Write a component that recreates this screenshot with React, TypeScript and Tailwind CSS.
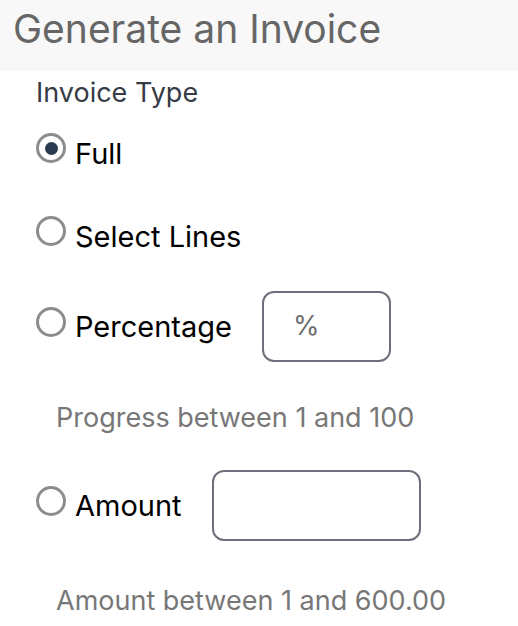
import { useState } from "react";

type Option = {
  id: string;
  label: string;
  input?: { width: string; placeholder?: string };
  help?: string;
};

const OPTIONS: Option[] = [
  { id: "full", label: "Full" },
  { id: "lines", label: "Select Lines" },
  {
    id: "percentage",
    label: "Percentage",
    input: { width: "w-[129px]", placeholder: "%" },
    help: "Progress between 1 and 100",
  },
  {
    id: "amount",
    label: "Amount",
    input: { width: "w-[209px]" },
    help: "Amount between 1 and 600.00",
  },
];

function Radio({ checked }: { checked: boolean }) {
  return (
    <span className="mb-[10px] flex h-[30px] w-[30px] shrink-0 items-center justify-center rounded-full border-[3px] border-[#8c8c8c] bg-white">
      {checked && <span className="h-[13px] w-[13px] rounded-full bg-[#2c3a4f]" />}
    </span>
  );
}

export default function App() {
  const [type, setType] = useState("full");

  return (
    <div className="min-h-[626px] w-[518px] bg-white font-['Inter','Liberation_Sans',sans-serif]">
      <div className="h-[71px] bg-[#f8f8f8] px-[13px] pt-[9px]">
        <h1 className="text-[39px] leading-none text-[#666666]">Generate an Invoice</h1>
      </div>
      <div className="pl-[36px]">
        <div className="mt-[8px] text-[27px] leading-none text-[#363b45]">Invoice Type</div>

        {/* radio options */}
        <div className="mt-[27px] flex flex-col">
          {OPTIONS.map((o, i) => (
            <div key={o.id} className={i === 0 ? "" : i === 1 ? "mt-[43px]" : i === 2 ? "mt-[35px]" : "mt-[39px]"}>
              <label
                className={`flex cursor-pointer items-center ${o.input ? "h-[71px]" : "h-[40px]"}`}
                onClick={() => setType(o.id)}
              >
                <Radio checked={type === o.id} />
                <span className="ml-[9px] text-[29px] leading-none text-black">{o.label}</span>
                {o.input && (
                  <span
                    className={`ml-[30px] flex h-[71px] items-center rounded-[12px] border-2 border-[#6c707a] px-[29px] text-[27px] text-[#6e6e6e] ${o.input.width}`}
                  >
                    {o.input.placeholder}
                  </span>
                )}
              </label>
              {o.help && (
                <div className={`pl-[20px] text-[27px] leading-none text-[#777777] ${i === 2 ? "mt-[42px]" : "mt-[46px]"}`}>
                  {o.help}
                </div>
              )}
            </div>
          ))}
        </div>
      </div>
    </div>
  );
}
